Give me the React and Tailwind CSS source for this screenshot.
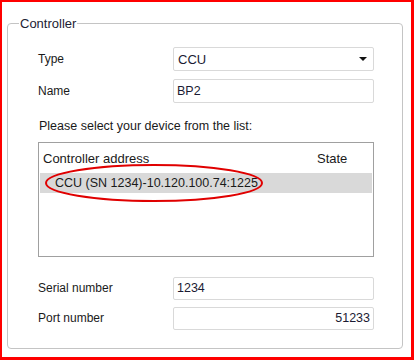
export default function App() {
  return (
    <div className="w-[414px] h-[360px] box-border bg-white border-[#ff0000] border-l-2 border-t-2 border-r-[3px] border-b-[3px] pt-[14px] pl-[5px] pr-[8px] pb-[8px] flex flex-col font-['Liberation_Sans',Arial,sans-serif] text-[12px] text-[#1a1a1a]">
      <fieldset className="flex-1 m-0 p-0 min-w-0 border border-[#c4c4c4] rounded-[4px]">
        <legend className="ml-[11px] px-[1px] text-[13px] leading-[15px] text-[#1c2233]">Controller</legend>
        <div className="pl-[30px] pr-[28px] pt-[16px] flex flex-col">
          <div className="flex items-center h-[24px]">
            <div className="w-[135px] leading-[15px]">Type</div>
            <div className="flex-1 h-full flex items-center justify-between border border-[#d9d9d9] rounded-[2px] pl-[4px] pr-[6px] text-[13px] text-[#1b1b33]">
              <span className="leading-[15px]">CCU</span>
              <svg width="8" height="4" viewBox="0 0 8 4">
                <polygon points="0,0 8,0 4,4" fill="#111" />
              </svg>
            </div>
          </div>
          <div className="flex items-center h-[24px] mt-[8px]">
            <div className="w-[135px] leading-[15px]">Name</div>
            <div className="flex-1 h-full flex items-center border border-[#d9d9d9] rounded-[2px] pl-[3px] text-[12.5px] text-[#1b1b33]">
              <span className="leading-[15px]">BP2</span>
            </div>
          </div>
          <div className="mt-[16px] ml-[1px] leading-[15px] text-[12.5px]">Please select your device from the list:</div>
          <div className="relative mt-[8px] h-[115px] border border-[#a0a0a0] flex flex-col">
            <div className="h-[30px] flex items-center text-[13px] leading-[15px]">
              <span className="w-[278px] pl-[4px]">Controller address</span>
              <span>State</span>
            </div>
            <div className="mx-[1px] h-[20px] bg-[#d9d9d9] flex items-center pl-[15px] text-[12.5px] leading-[15px]">
              CCU (SN 1234)-10.120.100.74:1225
            </div>
            <svg className="absolute left-[6px] top-[21px]" width="220" height="40" viewBox="0 0 220 40">
              <ellipse cx="109" cy="19" rx="108" ry="18" fill="none" stroke="#e00000" strokeWidth="2" />
            </svg>
          </div>
          <div className="flex items-center h-[23px] mt-[20px]">
            <div className="w-[135px] leading-[15px]">Serial number</div>
            <div className="flex-1 h-full flex items-center border border-[#d9d9d9] rounded-[2px] pl-[3px] text-[12.5px] text-[#1b1b33]">
              <span className="leading-[15px]">1234</span>
            </div>
          </div>
          <div className="flex items-center h-[23px] mt-[7px]">
            <div className="w-[135px] leading-[15px]">Port number</div>
            <div className="flex-1 h-full flex items-center justify-end border border-[#d9d9d9] rounded-[2px] pr-[3px] text-[12.5px] text-[#1b1b33]">
              <span className="leading-[15px]">51233</span>
            </div>
          </div>
        </div>
      </fieldset>
    </div>
  );
}
